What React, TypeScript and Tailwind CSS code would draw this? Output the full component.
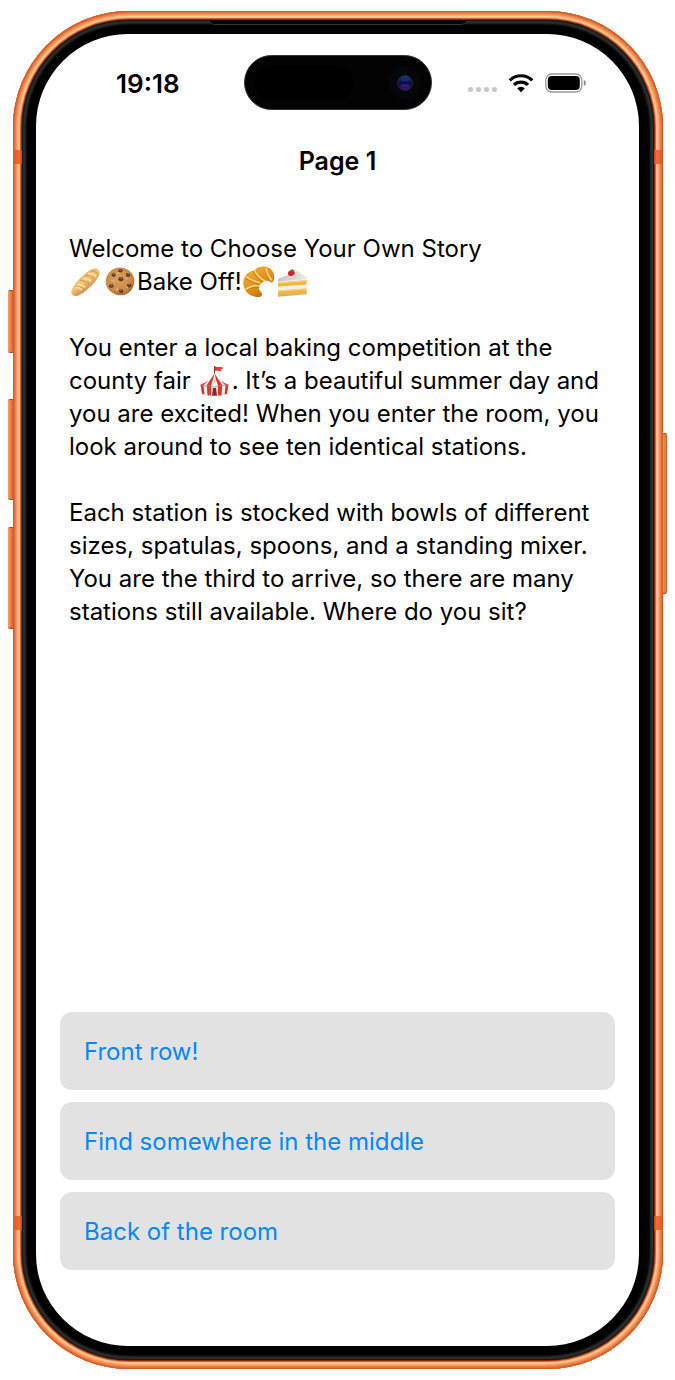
import type { ReactNode } from "react";

function Glyph({ label, children }: { label: string; children: ReactNode }) {
  return (
    <svg role="img" aria-label={label} viewBox="0 0 34 32" className="inline-block h-8 w-[34px] align-[-8px]">
      {children}
    </svg>
  );
}

function Baguette() {
  return (
    <Glyph label="baguette">
      <defs>
        <linearGradient id="crust" x1=".2" y1=".1" x2=".8" y2=".9">
          <stop offset="0" stopColor="#e3a24c" />
          <stop offset=".45" stopColor="#f3c479" />
          <stop offset="1" stopColor="#b9692a" />
        </linearGradient>
      </defs>
      <path d="M3 23C6.500 16 16 6.500 23.500 3c3.500-1.700 7.500.5 7 4.500-.8 6-13 18.500-21 22C4.500 31.500.8 28 3 23z" fill="url(#crust)" />
      <path d="M6.500 20.500c3 0 6 1 8 3M11.500 14.500c3 0 6.500 1 8.500 3.500M17 9.500c3 0 6.500 1 8.500 3.500M22 5c3 0 5 1 7 3" stroke="#d8954a" strokeWidth="1" fill="none" />
      <path d="M6.500 21.500c3-.3 5 .5 6.500 2.500M8 18.500c3-.3 6 .7 8 3M13.500 12.500c3-.3 6.500.7 8.500 3M19 7.500c3-.3 6 .7 8 3" stroke="#ffe2a8" strokeWidth="1.600" fill="none" />
    </Glyph>
  );
}

function Cookie() {
  return (
    <Glyph label="cookie">
      <defs>
        <radialGradient id="dough" cx=".45" cy=".4" r=".6">
          <stop offset="0" stopColor="#d9a060" />
          <stop offset=".75" stopColor="#cc8946" />
          <stop offset="1" stopColor="#a8672f" />
        </radialGradient>
      </defs>
      <path d="M17 1.500c5 0 9 2 11.500 5.500 2.500 3 3.500 7 2.500 11-1 5-4 8.500-8.500 10.500-4 1.500-9 1-12.500-1.500C5.500 24.500 3 21 2.800 16.500 2.600 12 4 8 7.500 5 10 2.700 13 1.500 17 1.500z" fill="url(#dough)" />
      <path d="M12 9c2-2 4-2 5-3M8 14c2 1 3 0 4 2M22 13l3-1M13 24l2-2M23 20l2 2" stroke="#e7b475" strokeWidth="1.300" fill="none" />
      <g fill="#5b3826">
        <path d="M15.500 3.500l3-.5 1.500 1.800-1.800 1.800-3-.5zM9 7.500l3-.5 1 2.300-1.800 1.700L8.500 10zM23.500 7l3 .3 1 2.700-2.700 1-2-1.300zM16.500 11l3.500.5.500 2.700-3 1.300-2.500-1.800zM6.500 18.500l3-.5 1.300 2.700-2.300 1.300-2.700-1zM24.500 18l3.500-.3.700 2.600-2.500 1.500-2.500-1.700zM16.500 23.500l3-.3 1.300 2.300-2.300 1.800-2.700-1.100z" />
      </g>
      <path d="M16.500 4.300h1.800M9.800 8.300h1.800M24.300 8h1.700M17.300 12.300h1.800M7.300 19.300h1.800M25.300 18.700H27M17.300 24.300H19" stroke="#b28666" strokeWidth=".9" />
    </Glyph>
  );
}

function Croissant() {
  return (
    <Glyph label="croissant">
      <defs>
        <linearGradient id="pastry" x1="0" y1="0" x2=".8" y2="1">
          <stop offset="0" stopColor="#f5b03a" />
          <stop offset=".55" stopColor="#e6921f" />
          <stop offset="1" stopColor="#b5630f" />
        </linearGradient>
      </defs>
      <path d="M12.500 4.500C15 1 21-.5 26 1.500c4.500 1.700 7 6.500 6 11.500-.4 2-1.300 3.500-2.300 3.500-1.500 0-1.700-1.800-4.200-1.800-3.500 0-6.500 1.800-8 4.500-1.300 2.500-.5 4.500.8 6 1.500 1.800 2.500 3.500 1 5C17.500 32 9 31 5 26.500 1.500 22.500.3 17 2 12.500 3.700 8 7.500 5 12.500 4.500z" fill="url(#pastry)" />
      <path d="M12.500 4.500c2.500 4.500 6 8.500 11 10.500M3.500 10.500c4.500 3 9.500 5 14.500 6.500M3.500 23.500c4-3 9-4.500 13.500-3.500M24 2c.8 4.500 3 9 6 12.500" stroke="#ffdc80" strokeWidth="1.500" fill="none" />
      <path d="M11.300 5c2 4.500 5 8.500 9.500 11M3 12c4.500 3 9 5 14 6M4.500 25c4-3 8.500-4.500 13-3.500" stroke="#bb7018" strokeWidth=".7" fill="none" />
    </Glyph>
  );
}

function Shortcake() {
  return (
    <Glyph label="shortcake">
      <defs>
        <linearGradient id="icing" x1="0" y1="0" x2="1" y2="0">
          <stop offset="0" stopColor="#c9c4bd" />
          <stop offset="1" stopColor="#eeeae4" />
        </linearGradient>
      </defs>
      <path d="M2 13L21 5l10 7v16L2 30z" fill="#f7f0e2" />
      <path d="M2 13L21 5l10 6.500-.5 1.500L2 15.500z" fill="url(#icing)" />
      <path d="M2 16.500l28.500-2.200v4.200L2 20.500zM2 24.500l28.500-2V27L2 29.500z" fill="#edb640" />
      <path d="M2 16.500l28.500-2.200v1.200L2 17.700zM2 24.500l28.500-2v1.200L2 25.800z" fill="#f8d272" />
      <path d="M2 29.300L30.500 27v1.300L2 30.800z" fill="#d5aa65" />
      <path d="M12 7c.5-2.300 3-3.300 5.300-2.300 1.700.8 2 2.600.5 4-1.300 1.200-3 1.800-4.500 1.100-1-.5-1.500-1.600-1.300-2.800z" fill="#d8222b" />
      <path d="M14.500 4l2.300-1 .5 1.200 2 .3-1.700 1.200-2.100-.2z" fill="#4f8c2c" />
    </Glyph>
  );
}

function CircusTent() {
  return (
    <Glyph label="circus tent">
      <path d="M16.500 1v8" stroke="#7b3730" strokeWidth="1" />
      <path d="M17 1.500c3 1.500 5-.5 8.500 1.500l-3 1.700 2 1.800c-3 0-4.500-1-7.500-.5z" fill="#e33b2e" />
      <path d="M16.500 8C14 13 9 17 2.500 19.500L4 29c7 2.300 18 2.300 25 0l1.500-9.500C24 17 19 13 16.500 8z" fill="#f7efe8" />
      <path d="M16.500 8c-1 5-2 8.500-3.500 12.500v10h-3.500L8.700 20C11.500 16 14.500 12 16.500 8zM16.500 8c1 5 2 8.500 3.500 12.500v10h3.500l.8-10.500C21.500 16 18.500 12 16.500 8zM10 15.500C8 17.500 5.500 18.700 2.500 19.500L4 29l2.400.6L5.500 20c2-1.300 3.300-2.800 4.500-4.500zM23 15.500c2 2 4.500 3.200 7.500 4L29 29l-2.400.6.900-9.600c-2-1.300-3.300-2.800-4.500-4.500z" fill="#d93632" />
      <path d="M15 23h3l1 7.700h-5z" fill="#8e2628" />
      <path d="M3 19.500c3 2 5.500 1 6.500 1s3.500 1.500 7 1.500 5-1.500 7-1.500 4.500.5 6.500-1" stroke="#b88980" strokeWidth=".7" fill="none" />
    </Glyph>
  );
}

function StatusBar() {
  return (
    <header className="grid grid-cols-[1fr_188px_1fr] pt-[21px]">
      <time className="pt-[14px] pl-20 text-[26px] leading-[30px] font-semibold">19:18</time>
      <div className="flex h-[55px] items-center justify-between rounded-full border border-[#333] bg-[#030303] pr-[10px] pl-[10px]">
        <span className="h-[34px] w-[98px] rounded-full bg-black" />
        <span className="flex size-8 items-center justify-center rounded-full bg-[#05070b]">
          <span className="flex size-4 flex-col items-center justify-evenly rounded-full border border-[#1b2340] bg-linear-to-b from-[#14495a] via-[#0b0a3c] to-[#4a0f70]">
            <span className="h-[3px] w-2 rounded-full bg-[#22208a]" />
            <span className="h-[3px] w-2 rounded-full bg-[#24207c]" />
          </span>
        </span>
      </div>
      <div className="flex items-start gap-[11px] pt-[18px] pl-9">
        <div className="mt-[14px] flex gap-[3px]">
          {[0, 1, 2, 3].map((dot) => (
            <span key={dot} className="size-[5px] rounded-[2px] bg-[#cbcbcb]" />
          ))}
        </div>
        <svg aria-label="Wi-Fi" role="img" viewBox="0 0 26 20" className="h-5 w-[26px]">
          <path d="M1.800 7.300a16 16 0 0 1 22.400 0M6 11.900a10 10 0 0 1 14 0" fill="none" stroke="#000" strokeWidth="3.200" />
          <path d="M9.200 15.300a5.500 5.500 0 0 1 7.600 0L13 19.200z" />
        </svg>
        <svg aria-label="Battery" role="img" viewBox="0 0 42 20" className="h-5 w-[42px]">
          <rect x=".8" y="1" width="36" height="18" rx="6" fill="none" stroke="#999" strokeWidth="1.300" />
          <rect x="2.800" y="3" width="32" height="14" rx="4" />
          <path d="M38.800 7c2.700 1 2.700 5 0 6z" fill="#888" />
        </svg>
      </div>
    </header>
  );
}

const choices = ["Front row!", "Find somewhere in the middle", "Back of the room"];

const sideKey =
  "absolute w-[5px] border-y border-[#b84a1c] bg-linear-to-r from-[#f5a36b] to-[#d85f2c]";

const antenna = "absolute h-[14px] w-[9px] bg-[#dd5a20]/80";

export default function App() {
  return (
    <div className="flex min-h-screen bg-white pt-[11px] pr-3 pb-[11px] pl-[13px] font-[Inter,'Noto_Sans',sans-serif] text-black">
      <div className="relative flex w-full">
        <span className={sideKey + " top-[279px] -left-[5px] h-[63px] rounded-l-[2px]"} />
        <span className={sideKey + " top-[388px] -left-[5px] h-[101px] rounded-l-[2px]"} />
        <span className={sideKey + " top-[516px] -left-[5px] h-[102px] rounded-l-[2px]"} />
        <span className={sideKey + " top-[422px] -right-[4px] h-[161px] rounded-r-[2px]"} />
        <div className="relative flex w-full rounded-[116px] bg-[#7a2b10] p-[9px] shadow-[inset_0_0_0_1px_#d05c28,inset_0_0_0_2px_#e2703a,inset_0_0_0_3px_#ee8148,inset_0_0_0_4px_#f39558,inset_0_0_0_5px_#f8aa72,inset_0_0_0_6px_#fdc490,inset_0_0_0_7px_#fbb984,inset_0_0_0_8px_#d4632e]">
          <span className={antenna + " top-[139px] left-0"} />
          <span className={antenna + " top-[139px] right-0"} />
          <span className={antenna + " bottom-[139px] left-0"} />
          <span className={antenna + " right-0 bottom-[139px]"} />
          <div className="relative flex w-full rounded-[107px] bg-black py-[14px] pr-[15px] pl-[14px] shadow-[inset_0_0_0_1px_#171818,inset_0_0_2px_4px_#2c2d2d]">
            <span className="absolute inset-x-[188px] top-0 h-[5px] rounded-b-full border-b border-[#333] bg-black" />
            <div className="flex w-full flex-col rounded-[92px] bg-white">
              <StatusBar />
              <h1 className="mt-[34px] text-center text-[25px] leading-[34px] font-semibold">Page 1</h1>
              <main className="flex grow flex-col px-6 pb-19">
                <div className="mt-[54px] flex flex-col gap-[33px] px-[9px] text-2xl leading-[33px]">
                  <p>
                    Welcome to Choose Your Own Story
                    <br />
                    <Baguette />
                    <Cookie />
                    Bake Off!
                    <Croissant />
                    <Shortcake />
                  </p>
                  <p>
                    You enter a local baking competition at the county fair <CircusTent />. It’s a beautiful summer day
                    and you are excited! When you enter the room, you look around to see ten identical stations.
                  </p>
                  <p>
                    Each station is stocked with bowls of different sizes, spatulas, spoons, and a standing mixer. You
                    are the third to arrive, so there are many stations still available. Where do you sit?
                  </p>
                </div>
                <div className="mt-auto flex flex-col gap-3">
                  {choices.map((choice) => (
                    <button
                      key={choice}
                      type="button"
                      className="h-[78px] rounded-xl bg-[#e2e2e2] px-6 text-left text-2xl leading-[33px] text-[#0088ff]"
                    >
                      {choice}
                    </button>
                  ))}
                </div>
              </main>
            </div>
          </div>
        </div>
      </div>
    </div>
  );
}
